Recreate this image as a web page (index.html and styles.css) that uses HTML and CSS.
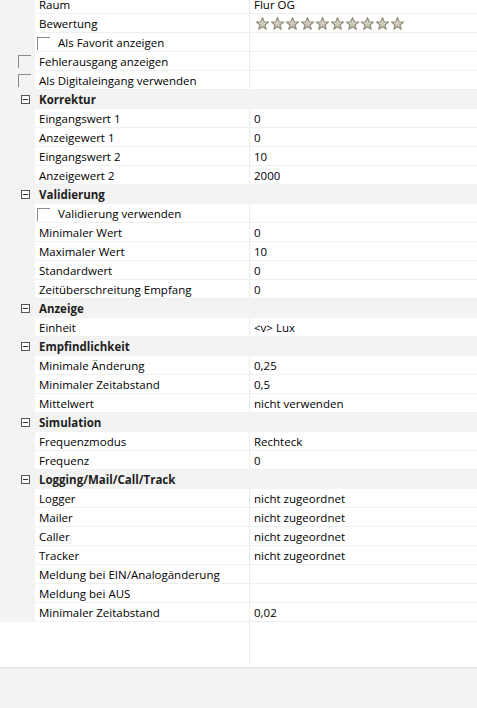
FILE: index.html
```html
<!DOCTYPE html>
<html>
<head>
<meta charset="utf-8">
<link rel="stylesheet" href="styles.css">
</head>
<body>
<div class="panel">
  <div class="grid">
    <div class="row"><div class="gut"></div><div class="lab">Raum</div><div class="val">Flur OG</div></div>
    <div class="row"><div class="gut"></div><div class="lab">Bewertung</div><div class="val stars">
      <svg width="152" height="15" viewBox="0 0 152 15">
        <defs>
          <linearGradient id="sg" x1="0" y1="0" x2="0" y2="1">
            <stop offset="0" stop-color="#ebe8df"/>
            <stop offset="1" stop-color="#b9b3a0"/>
          </linearGradient>
          <path id="st" d="M6.5 0.6 L8.1 4.8 L12.6 5 L9.1 7.9 L10.3 12.3 L6.5 9.8 L2.7 12.3 L3.9 7.9 L0.4 5 L4.9 4.8 Z" fill="url(#sg)" stroke="#8f8a78" stroke-width="1.1" stroke-linejoin="round"/>
        </defs>
        <use href="#st" x="1" y="1"/><use href="#st" x="16" y="1"/><use href="#st" x="31" y="1"/><use href="#st" x="46" y="1"/><use href="#st" x="61" y="1"/>
        <use href="#st" x="76" y="1"/><use href="#st" x="91" y="1"/><use href="#st" x="106" y="1"/><use href="#st" x="121" y="1"/><use href="#st" x="136" y="1"/>
      </svg>
    </div></div>
    <div class="row"><div class="gut"></div><div class="lab"><span class="cb"></span><span class="cbtext">Als Favorit anzeigen</span></div><div class="val"></div></div>
    <div class="row"><div class="gut gcb"><span class="cb"></span></div><div class="lab">Fehlerausgang anzeigen</div><div class="val"></div></div>
    <div class="row"><div class="gut gcb"><span class="cb"></span></div><div class="lab">Als Digitaleingang verwenden</div><div class="val"></div></div>

    <div class="row head"><div class="gut"><span class="minus"></span></div><div class="lab">Korrektur</div></div>
    <div class="row"><div class="gut"></div><div class="lab">Eingangswert 1</div><div class="val">0</div></div>
    <div class="row"><div class="gut"></div><div class="lab">Anzeigewert 1</div><div class="val">0</div></div>
    <div class="row"><div class="gut"></div><div class="lab">Eingangswert 2</div><div class="val">10</div></div>
    <div class="row"><div class="gut"></div><div class="lab">Anzeigewert 2</div><div class="val">2000</div></div>

    <div class="row head"><div class="gut"><span class="minus"></span></div><div class="lab">Validierung</div></div>
    <div class="row"><div class="gut"></div><div class="lab"><span class="cb"></span><span class="cbtext">Validierung verwenden</span></div><div class="val"></div></div>
    <div class="row"><div class="gut"></div><div class="lab">Minimaler Wert</div><div class="val">0</div></div>
    <div class="row"><div class="gut"></div><div class="lab">Maximaler Wert</div><div class="val">10</div></div>
    <div class="row"><div class="gut"></div><div class="lab">Standardwert</div><div class="val">0</div></div>
    <div class="row"><div class="gut"></div><div class="lab">Zeitüberschreitung Empfang</div><div class="val">0</div></div>

    <div class="row head"><div class="gut"><span class="minus"></span></div><div class="lab">Anzeige</div></div>
    <div class="row"><div class="gut"></div><div class="lab">Einheit</div><div class="val">&lt;v&gt; Lux</div></div>

    <div class="row head"><div class="gut"><span class="minus"></span></div><div class="lab">Empfindlichkeit</div></div>
    <div class="row"><div class="gut"></div><div class="lab">Minimale Änderung</div><div class="val">0,25</div></div>
    <div class="row"><div class="gut"></div><div class="lab">Minimaler Zeitabstand</div><div class="val">0,5</div></div>
    <div class="row"><div class="gut"></div><div class="lab">Mittelwert</div><div class="val">nicht verwenden</div></div>

    <div class="row head"><div class="gut"><span class="minus"></span></div><div class="lab">Simulation</div></div>
    <div class="row"><div class="gut"></div><div class="lab">Frequenzmodus</div><div class="val">Rechteck</div></div>
    <div class="row"><div class="gut"></div><div class="lab">Frequenz</div><div class="val">0</div></div>

    <div class="row head"><div class="gut"><span class="minus"></span></div><div class="lab">Logging/Mail/Call/Track</div></div>
    <div class="row"><div class="gut"></div><div class="lab">Logger</div><div class="val">nicht zugeordnet</div></div>
    <div class="row"><div class="gut"></div><div class="lab">Mailer</div><div class="val">nicht zugeordnet</div></div>
    <div class="row"><div class="gut"></div><div class="lab">Caller</div><div class="val">nicht zugeordnet</div></div>
    <div class="row"><div class="gut"></div><div class="lab">Tracker</div><div class="val">nicht zugeordnet</div></div>
    <div class="row"><div class="gut"></div><div class="lab">Meldung bei EIN/Analogänderung</div><div class="val"></div></div>
    <div class="row"><div class="gut"></div><div class="lab">Meldung bei AUS</div><div class="val"></div></div>
    <div class="row"><div class="gut"></div><div class="lab">Minimaler Zeitabstand</div><div class="val">0,02</div></div>
  </div>
  <div class="filler"><div class="fl"></div><div class="fr"></div></div>
</div>
<div class="footer"></div>
</body>
</html>
```
FILE: styles.css
```css
html, body {
  margin: 0;
  padding: 0;
  background: #f2f2f2;
}
body {
  width: 477px;
  height: 708px;
  overflow: hidden;
  display: flex;
  flex-direction: column;
  font-family: "Open Sans", "Noto Sans", sans-serif;
  font-size: 11.5px;
  color: #000;
}
.panel {
  flex: 0 0 667px;
  height: 667px;
  background: #ffffff;
  overflow: hidden;
  display: flex;
  flex-direction: column;
}
.grid {
  margin-top: -5px;
  flex: none;
}
.row {
  display: grid;
  grid-template-columns: 35px 214px 228px;
  height: 19px;
}
.gut {
  background: #f3f3f3;
  position: relative;
}
.lab {
  display: flex;
  align-items: center;
  padding-left: 4px;
  border-bottom: 1px solid #f0f0f0;
  white-space: nowrap;
}
.val {
  display: flex;
  align-items: center;
  padding-left: 4px;
  border-left: 1px solid #ececec;
  border-bottom: 1px solid #f0f0f0;
  white-space: nowrap;
}
.head {
  background: #f3f3f3;
  grid-template-columns: 35px 442px;
}
.head .lab {
  font-weight: bold;
  border-bottom: none;
  color: #1e1e1e;
}
.minus {
  position: absolute;
  left: 21px;
  top: 5px;
  width: 7px;
  height: 7px;
  border: 1px solid #555;
  background: #fff;
}
.minus::after {
  content: "";
  position: absolute;
  left: 1px;
  top: 3px;
  width: 5px;
  height: 1px;
  background: #333;
}
.cb {
  display: inline-block;
  width: 13px;
  height: 13px;
  border-left: 1px solid #8a8a8a;
  border-top: 1px solid #8a8a8a;
  box-sizing: border-box;
}
.lab .cb {
  margin-left: -2px;
  margin-top: 2px;
}
.cbtext {
  margin-left: 8px;
}
.gcb .cb {
  position: absolute;
  left: 18px;
  top: 3px;
}
.stars svg {
  display: block;
  margin-left: 1px;
}
.filler {
  flex: 0 0 41px;
  display: grid;
  grid-template-columns: 249px 228px;
}
.fr {
  border-left: 1px solid #ececec;
}
.footer {
  flex: 1 1 auto;
  background: #f2f2f2;
  border-top: 1px solid #e2e2e2;
}
```
